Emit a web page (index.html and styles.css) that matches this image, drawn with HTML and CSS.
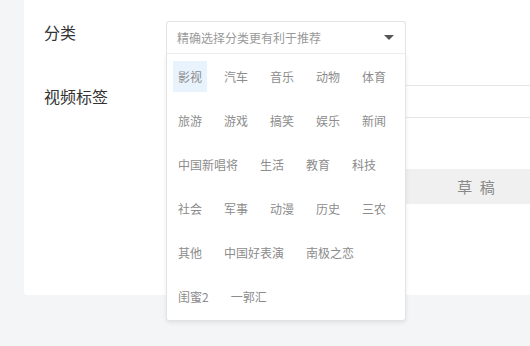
FILE: index.html
```html
<!DOCTYPE html>
<html lang="zh-CN">
<head>
    <meta charset="UTF-8">
    <meta name="viewport" content="width=device-width, initial-scale=1.0">
    <title>发布视频</title>
    <link rel="stylesheet" href="styles.css">
</head>
<body>
    <div class="card">
        <div class="form-row row-category">
            <div class="label">分类</div>
            <div class="select-wrap">
                <div class="select-head">
                    <span class="placeholder">精确选择分类更有利于推荐</span>
                    <span class="arrow"></span>
                </div>
                <div class="select-menu">
                    <span class="item active">影视</span>
                    <span class="item">汽车</span>
                    <span class="item">音乐</span>
                    <span class="item">动物</span>
                    <span class="item">体育</span>
                    <span class="item">旅游</span>
                    <span class="item">游戏</span>
                    <span class="item">搞笑</span>
                    <span class="item">娱乐</span>
                    <span class="item">新闻</span>
                    <span class="item">中国新唱将</span>
                    <span class="item">生活</span>
                    <span class="item">教育</span>
                    <span class="item">科技</span>
                    <span class="item">社会</span>
                    <span class="item">军事</span>
                    <span class="item">动漫</span>
                    <span class="item">历史</span>
                    <span class="item">三农</span>
                    <span class="item">其他</span>
                    <span class="item">中国好表演</span>
                    <span class="item">南极之恋</span>
                    <span class="item">闺蜜2</span>
                    <span class="item">一郭汇</span>
                </div>
            </div>
        </div>
        <div class="form-row row-tags">
            <div class="label">视频标签</div>
            <div class="tag-input"></div>
        </div>
        <div class="form-row row-actions">
            <div class="label"></div>
            <button type="button" class="btn-draft">草 稿</button>
        </div>
    </div>
</body>
</html>
```

FILE: styles.css
```css
body {
    font-family: "Noto Sans CJK SC", "Noto Sans", sans-serif;
    background-color: #f4f5f7;
    margin: 0;
    padding: 0;
    height: 346px;
    overflow: hidden;
}
.card {
    background-color: white;
    margin-left: 24px;
    height: 295px;
    border-radius: 0 0 0 4px;
    padding: 21px 0 0 20px;
    box-sizing: border-box;
}
.form-row {
    display: flex;
}
.label {
    width: 122px;
    flex-shrink: 0;
    font-size: 16px;
    color: #333;
}
.row-category {
    height: 33px;
}
.row-category .label {
    line-height: 23px;
}
.select-wrap {
    position: relative;
    width: 240px;
}
.select-head {
    height: 33px;
    box-sizing: border-box;
    border: 1px solid #e3e3e3;
    border-bottom: 1px solid #ececec;
    border-radius: 3px 3px 0 0;
    display: flex;
    align-items: center;
    justify-content: space-between;
    padding: 0 10px;
    background: white;
    position: relative;
    z-index: 3;
}
.placeholder {
    font-size: 12px;
    color: #9a9a9a;
}
.arrow {
    width: 0;
    height: 0;
    border-left: 5px solid transparent;
    border-right: 5px solid transparent;
    border-top: 5px solid #555;
    margin-right: 1px;
}
.select-menu {
    position: absolute;
    top: 33px;
    left: 0;
    width: 240px;
    box-sizing: border-box;
    background: white;
    border: 1px solid #e3e3e3;
    border-top: none;
    border-radius: 0 0 3px 3px;
    box-shadow: 0 2px 4px rgba(0, 0, 0, 0.08);
    padding: 7px 6px 8px 6px;
    display: flex;
    flex-wrap: wrap;
    column-gap: 12px;
    row-gap: 13px;
    z-index: 2;
}
.item {
    font-size: 12px;
    color: #8c8c8c;
    height: 31px;
    line-height: 31px;
    padding: 0 5px;
    white-space: nowrap;
}
.item.active {
    background-color: #e9f3fd;
}
.row-tags {
    margin-top: 31px;
}
.row-tags .label {
    line-height: 23px;
}
.tag-input {
    flex: 1;
    height: 33px;
    box-sizing: border-box;
    border-top: 1px solid #e6e6e6;
    border-bottom: 1px solid #e6e6e6;
}
.row-actions {
    margin-top: 51px;
}
.btn-draft {
    flex: 1;
    height: 35px;
    border: none;
    background-color: #f0f0f0;
    color: #888;
    font-family: inherit;
    font-size: 15px;
    letter-spacing: 2px;
    padding: 0 0 0 258px;
    border-radius: 2px 0 0 2px;
}
```
